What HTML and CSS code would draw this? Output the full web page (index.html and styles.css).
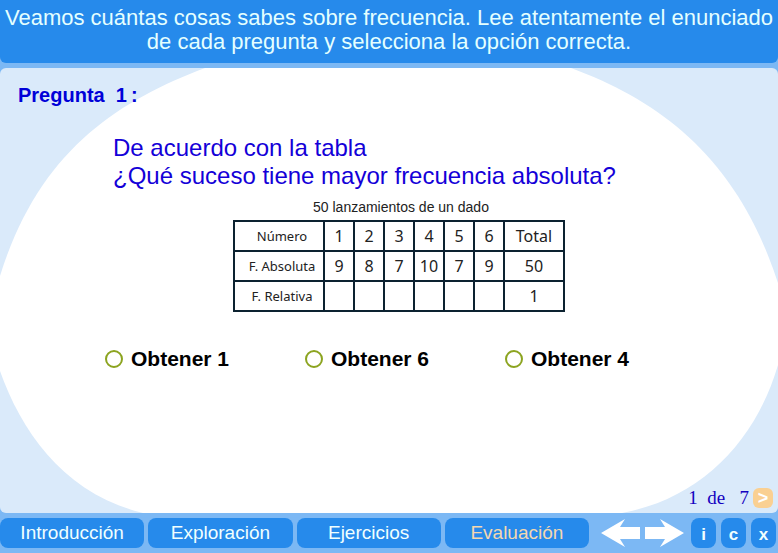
FILE: index.html
```html
<!DOCTYPE html>
<html lang="es">
<head>
<meta charset="utf-8">
<meta name="viewport" content="width=device-width, initial-scale=1">
<title>Evaluación: frecuencia</title>
<link rel="stylesheet" href="styles.css">
</head>
<body>
<header class="intro">
  <p class="intro-text">Veamos cuántas cosas sabes sobre frecuencia. Lee atentamente el enunciado de cada pregunta y selecciona la opción correcta.</p>
</header>
<main class="stage">
  <svg class="backdrop" viewBox="0 0 778 445" preserveAspectRatio="none" aria-hidden="true">
    <path fill="#fff" d="M205 0C115 34 38 85 0 208V303C22 365 65 426 143 445H622C702 430 756 372 778 297V215C738 92 663 34 571 0Z"/>
  </svg>
  <h1 class="number">Pregunta&nbsp; 1&#8201;:</h1>
  <p class="question" id="question">De acuerdo con la tabla<br>¿Qué suceso tiene mayor frecuencia absoluta?</p>
  <table class="data">
    <caption>50 lanzamientos de un dado</caption>
    <colgroup><col class="col-label"><col span="6" class="col-value"><col class="col-total"></colgroup>
    <tr><th scope="row">Número</th><td>1</td><td>2</td><td>3</td><td>4</td><td>5</td><td>6</td><td>Total</td></tr>
    <tr><th scope="row">F. Absoluta</th><td>9</td><td>8</td><td>7</td><td>10</td><td>7</td><td>9</td><td>50</td></tr>
    <tr><th scope="row">F. Relativa</th><td></td><td></td><td></td><td></td><td></td><td></td><td>1</td></tr>
  </table>
  <form class="options" role="radiogroup" aria-labelledby="question">
    <label class="option"><input type="radio" name="answer" value="1">Obtener 1</label>
    <label class="option"><input type="radio" name="answer" value="6">Obtener 6</label>
    <label class="option"><input type="radio" name="answer" value="4">Obtener 4</label>
  </form>
  <div class="pager">
    <span>1&nbsp; de&nbsp;&nbsp; 7</span>
    <button class="next" type="button">&gt;</button>
  </div>
</main>
<footer class="bar">
  <nav class="tabs">
    <a class="tab" href="#introduccion">Introducción</a>
    <a class="tab" href="#exploracion">Exploración</a>
    <a class="tab" href="#ejercicios">Ejercicios</a>
    <a class="tab current" href="#evaluacion" aria-current="page">Evaluación</a>
  </nav>
  <div class="arrows">
    <button class="arrow" type="button" aria-label="Anterior"><svg width="39" height="30" viewBox="0 0 39 30"><path fill="#fff" d="M0 15L24 1L19 9H39V21H19L24 29Z"/></svg></button>
    <button class="arrow" type="button" aria-label="Siguiente"><svg width="39" height="30" viewBox="0 0 39 30"><path fill="#fff" d="M39 15L15 1L20 9H0V21H20L15 29Z"/></svg></button>
  </div>
  <div class="tools">
    <button class="tool" type="button">i</button>
    <button class="tool" type="button">c</button>
    <button class="tool" type="button">x</button>
  </div>
</footer>
</body>
</html>
```
FILE: styles.css
```css
* {
  box-sizing: border-box;
}

body {
  display: flex;
  flex-direction: column;
  gap: 5px;
  min-height: 100vh;
  margin: 0;
  background: #7cb8f4;
  color: #000;
  font-family: "Liberation Sans", Arial, sans-serif;
}

p,
h1 {
  margin: 0;
}

button {
  padding: 0;
  border: 0;
  font: inherit;
  cursor: pointer;
}

.intro {
  padding: 6px 4px 9px;
  border-radius: 0 0 6px 6px;
  background: #268aeb;
  color: #e4ffff;
}

.intro-text {
  font-size: 22px;
  line-height: 24px;
  text-align: center;
}

.stage {
  position: relative;
  display: flex;
  flex: 1;
  flex-direction: column;
  overflow: hidden;
  border-radius: 6px;
  background: #daeafa;
}

.backdrop {
  position: absolute;
  inset: 0;
  width: 100%;
  height: 100%;
}

.number,
.question,
.data,
.options,
.pager {
  position: relative;
}

.number {
  padding: 15px 18px 0;
  color: #0000d8;
  font-size: 20px;
  line-height: 24px;
}

.question {
  padding: 27px 0 0 113px;
  color: #1400d8;
  font-size: 24px;
  line-height: 28px;
}

.data {
  width: 332px;
  margin: 7px auto 0 233px;
  border-collapse: collapse;
  table-layout: fixed;
  color: #222;
  font-family: "Noto Sans", "Open Sans", sans-serif;
  font-size: 16px;
  line-height: 20px;
}

.data caption {
  padding: 0 0 3px 4px;
  font-family: "Liberation Sans", Arial, sans-serif;
  font-size: 14px;
  line-height: 20px;
}

.col-label {
  width: 90px;
}

.col-value {
  width: 30px;
}

.col-total {
  width: 60px;
}

.data th,
.data td {
  height: 30px;
  padding: 0;
  border: 2px solid #0c2230;
  text-align: center;
}

.data th {
  padding-left: 6px;
  font-size: 13px;
  font-weight: 400;
}

.options {
  display: flex;
  padding: 35px 0 0 105px;
}

.option {
  display: flex;
  flex: 0 0 200px;
  align-items: center;
  gap: 8px;
  font-size: 21px;
  font-weight: 700;
  line-height: 24px;
}

.option input {
  width: 18px;
  height: 18px;
  margin: 0;
  border: 2px solid #8ca420;
  border-radius: 50%;
  appearance: none;
  background: #fff;
}

.option input:checked {
  background: radial-gradient(#8ca420 40%, #fff 50%);
}

.pager {
  display: flex;
  align-items: center;
  justify-content: flex-end;
  gap: 4px;
  margin-top: auto;
  padding: 0 5px 5px;
  color: #1400c0;
  font-family: "Liberation Serif", "Times New Roman", serif;
  font-size: 19px;
  line-height: 20px;
}

.next {
  width: 20px;
  height: 20px;
  border-radius: 6px;
  background: #fad092;
  color: #fff;
  font: 700 18px/20px "Liberation Sans", Arial, sans-serif;
}

.bar {
  display: flex;
  gap: 7px;
  padding: 0 2px 5px 0;
}

.tabs {
  display: grid;
  flex: 1;
  grid-template-columns: repeat(4, 1fr);
  gap: 4px;
}

.tab,
.tool {
  border-radius: 8px;
  background: #268aeb;
  color: #f0ffff;
  line-height: 30px;
  text-align: center;
}

.tab {
  font-size: 19px;
  text-decoration: none;
}

.tab.current {
  color: #f4d8b0;
}

.arrows,
.tools {
  display: flex;
  gap: 5px;
}

.arrows {
  padding-left: 5px;
}

.arrow {
  height: 30px;
  background: none;
}

.arrow svg {
  display: block;
}

.tool {
  width: 25px;
  height: 30px;
  padding-top: 2px;
  font-size: 17px;
  font-weight: 700;
}
```
